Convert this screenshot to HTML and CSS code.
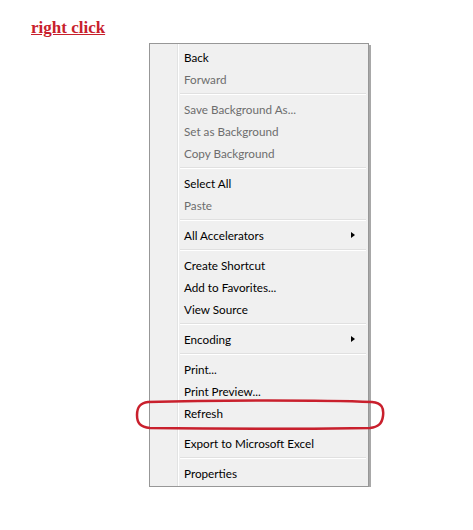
FILE: index.html
```html
<!DOCTYPE html>
<html lang="en">
<head>
    <meta charset="UTF-8">
    <title>right click</title>
    <link rel="stylesheet" href="styles.css">
</head>
<body>

    <h3 class="title">right click</h3>

    <div class="menu-wrap">
        <ul class="menu">
            <li class="item">Back</li>
            <li class="item off">Forward</li>
            <li class="sep"></li>
            <li class="item off">Save Background As...</li>
            <li class="item off">Set as Background</li>
            <li class="item off">Copy Background</li>
            <li class="sep"></li>
            <li class="item">Select All</li>
            <li class="item off">Paste</li>
            <li class="sep"></li>
            <li class="item sub">All Accelerators</li>
            <li class="sep"></li>
            <li class="item">Create Shortcut</li>
            <li class="item">Add to Favorites...</li>
            <li class="item">View Source</li>
            <li class="sep"></li>
            <li class="item sub">Encoding</li>
            <li class="sep"></li>
            <li class="item">Print...</li>
            <li class="item">Print Preview...</li>
            <li class="item">Refresh</li>
            <li class="sep"></li>
            <li class="item">Export to Microsoft Excel</li>
            <li class="sep"></li>
            <li class="item">Properties</li>
        </ul>

        <svg class="circle" width="252" height="32" viewBox="0 0 252 32">
            <path d="M14 3 C80 1 190 1 238 3 C248 4 250 9 249 17 C248 25 244 28 236 29 C170 30 80 30 16 29 C6 28 3 24 3 16 C3 8 6 4 14 3 Z" fill="none" stroke="#c9202d" stroke-width="2.5"/>
        </svg>
    </div>

</body>
</html>
```

FILE: styles.css
```css
body {
    margin: 0;
    background: #fff;
    font-family: Lato, "Noto Sans", sans-serif;
}
.title {
    margin: 0;
    padding: 19px 0 0 31px;
    font-family: "Liberation Serif", "DejaVu Serif", serif;
    font-size: 17px;
    font-weight: bold;
    color: #c8202c;
    text-decoration: underline;
    line-height: 18px;
}
.menu-wrap {
    position: relative;
    padding: 6px 0 0 149px;
}
.menu {
    list-style: none;
    margin: 0;
    padding: 2px;
    width: 214px;
    background: #f0f0f0;
    border: 1px solid #979797;
    box-shadow: 2px 2px 0 #a8a8a8;
    background-image: linear-gradient(to right, transparent 27px, #e2e3e3 27px, #e2e3e3 28px, #fff 28px, #fff 29px, transparent 29px);
}
.item {
    position: relative;
    height: 22px;
    line-height: 22px;
    padding-left: 32px;
    font-size: 11.7px;
    color: #000;
}
.item.off {
    color: #6d6d6d;
}
.sub::after {
    content: "";
    position: absolute;
    right: 11px;
    top: 8px;
    border-left: 4px solid #000;
    border-top: 3.5px solid transparent;
    border-bottom: 3.5px solid transparent;
}
.sep {
    height: 8px;
    margin-left: 28px;
    background: linear-gradient(to bottom, transparent 3px, #e0e0e0 3px, #e0e0e0 4px, #fff 4px, #fff 5px, transparent 5px);
}
.circle {
    position: absolute;
    left: 134px;
    top: 362px;
}
```
